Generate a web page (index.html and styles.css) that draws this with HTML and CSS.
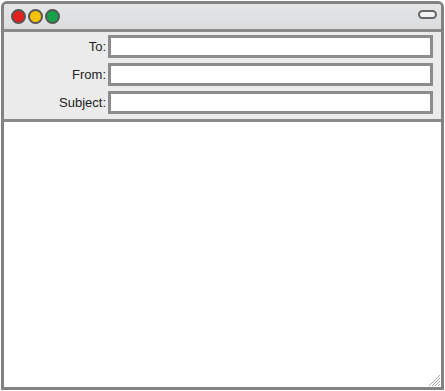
FILE: index.html
```html
<!DOCTYPE html>
<html lang="en">
<head>
  <meta charset="UTF-8">
  <title>Compose</title>
  <link rel="stylesheet" href="styles.css">
</head>
<body>
  <div class="window">
    <!-- Title bar -->
    <div class="titlebar">
      <div class="lights">
        <span class="light red"></span>
        <span class="light yellow"></span>
        <span class="light green"></span>
      </div>
      <span class="pill"></span>
    </div>

    <!-- Mail header fields -->
    <div class="header">
      <div class="row">
        <label>To:</label>
        <div class="field"></div>
      </div>
      <div class="row">
        <label>From:</label>
        <div class="field"></div>
      </div>
      <div class="row">
        <label>Subject:</label>
        <div class="field"></div>
      </div>
    </div>

    <div class="content">
      <svg class="grip" width="12" height="12" viewBox="0 0 12 12">
        <path d="M12 1 L1 12 M12 4 L4 12 M12 7 L7 12 M12 10 L10 12" stroke="#a8a8a8" stroke-width="1" />
      </svg>
    </div>
  </div>
</body>
</html>
```

FILE: styles.css
```css
body {
  margin: 0;
  padding: 1px;
  background: #fff;
  font-family: "Liberation Sans", Arial, sans-serif;
}

.window {
  width: 437px;
  height: 383px;
  border: 3px solid #828282;
  border-radius: 6px 6px 0 0;
  display: flex;
  flex-direction: column;
  overflow: hidden;
}

/* Title bar */
.titlebar {
  height: 25px;
  background: linear-gradient(#e4e5e6, #dcdddf);
  border-bottom: 3px solid #8a8a8a;
  display: flex;
  align-items: center;
  justify-content: space-between;
  padding: 0 4px 0 7px;
}

.lights {
  display: flex;
  gap: 2px;
}

.light {
  width: 11px;
  height: 11px;
  border-radius: 50%;
  border: 2.5px solid #555;
}

.red { background: #e2211c; }
.yellow { background: #f4c200; }
.green { background: #17a24a; }

.pill {
  width: 15px;
  height: 5px;
  border: 2.5px solid #666;
  border-radius: 6px;
  background: #f2f2f2;
  margin-top: -4px;
}

/* Header */
.header {
  background: #ebebeb;
  border-bottom: 3px solid #8a8a8a;
  padding: 3px 8px 5px 0;
  display: flex;
  flex-direction: column;
  gap: 5px;
}

.row {
  display: flex;
  align-items: center;
}

.row label {
  width: 102px;
  text-align: right;
  font-size: 13px;
  color: #222;
  padding-right: 2px;
}

.field {
  flex: 1;
  height: 17px;
  border: 3px solid #8c8c8c;
  background: #fff;
}

.content {
  flex: 1;
  background: #fff;
  position: relative;
}

.grip {
  position: absolute;
  right: 1px;
  bottom: 1px;
}
```
